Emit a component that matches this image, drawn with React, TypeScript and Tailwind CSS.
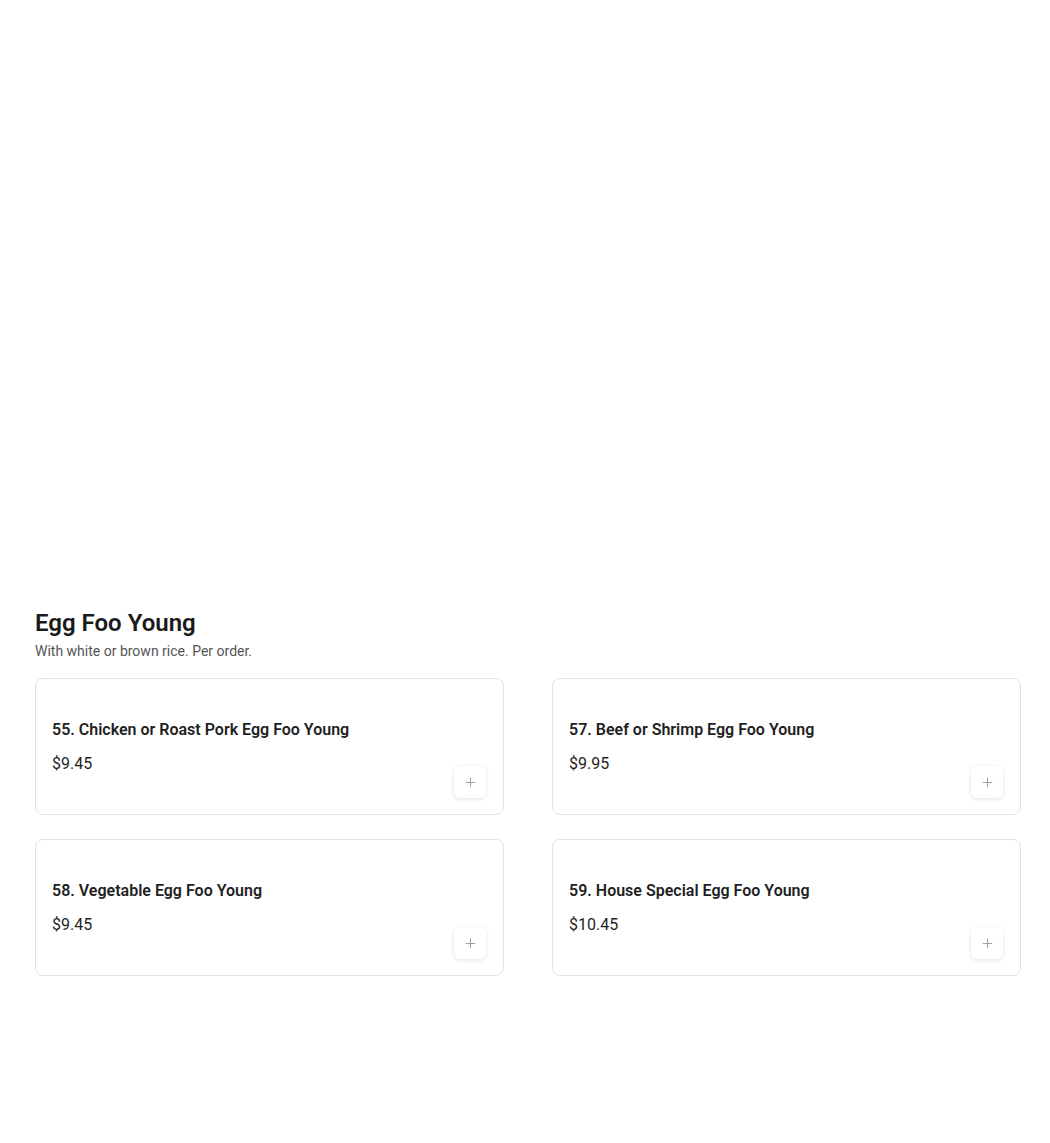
import { Plus } from 'lucide-react'

const ITEMS = [
  { name: '55. Chicken or Roast Pork Egg Foo Young', price: '$9.45' },
  { name: '57. Beef or Shrimp Egg Foo Young', price: '$9.95' },
  { name: '58. Vegetable Egg Foo Young', price: '$9.45' },
  { name: '59. House Special Egg Foo Young', price: '$10.45' },
]

function ItemCard({ name, price }: { name: string; price: string }) {
  return (
    <div className="relative h-[137px] rounded-lg border border-[#e2e2e2] bg-white px-4 pt-[39px]">
      <h3 className="text-base leading-6 font-semibold text-[#1f1f1f]">{name}</h3>
      <p className="mt-[10px] text-base leading-6 text-[#1f1f1f]">{price}</p>
      <button className="absolute right-[17px] bottom-4 flex h-8 w-8 items-center justify-center rounded-md bg-white shadow-[0_1px_4px_rgba(0,0,0,0.12)]">
        <Plus size={15} strokeWidth={1.5} className="text-[#9a9a9a]" />
      </button>
    </div>
  )
}

export default function App() {
  return (
    <div className="min-h-[1143px] bg-white font-['Roboto',sans-serif]">
      <div className="w-[986px] ml-[35px] pt-[607px]">
        {/* section header */}
        <h2 className="text-2xl leading-8 font-semibold text-[#1a1a1a]">Egg Foo Young</h2>
        <p className="mt-[2px] text-sm leading-5 text-[#555]">With white or brown rice. Per order.</p>

        <div className="mt-[17px] grid grid-cols-2 gap-x-[48px] gap-y-[24px]">
          {ITEMS.map((item) => (
            <ItemCard key={item.name} name={item.name} price={item.price} />
          ))}
        </div>
      </div>
    </div>
  )
}
